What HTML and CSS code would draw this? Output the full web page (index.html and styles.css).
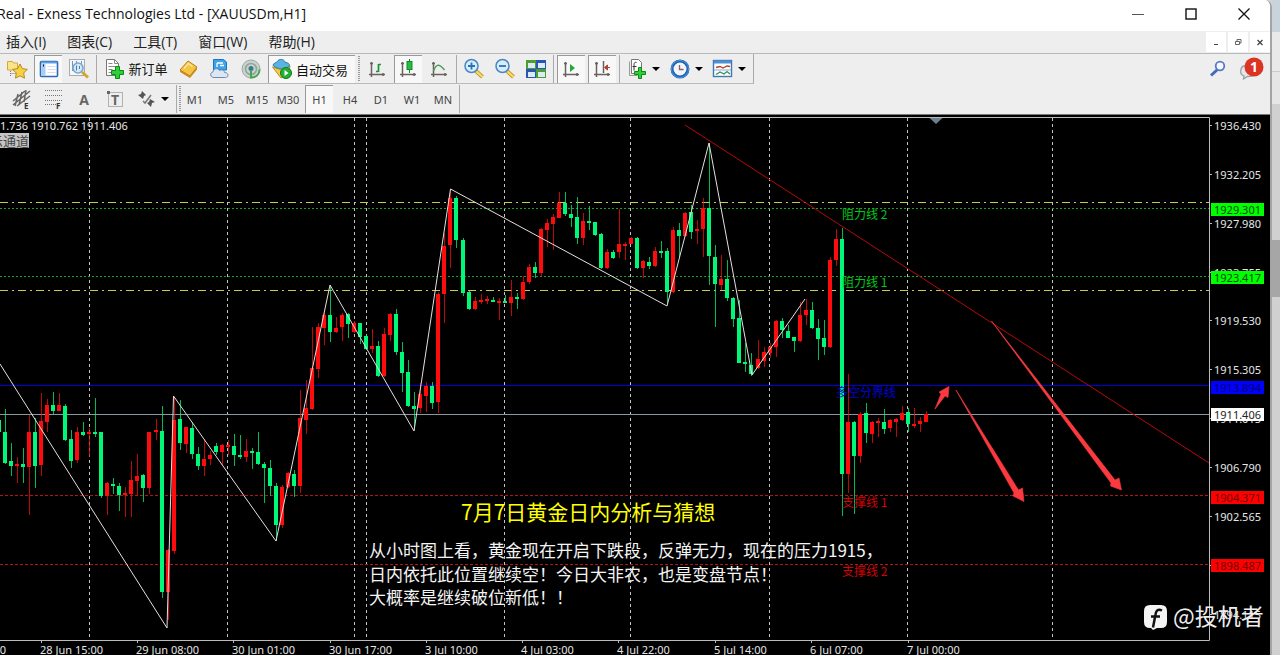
FILE: index.html
```
<!DOCTYPE html>
<html lang="zh-CN">
<head>
  <meta charset="UTF-8">
  <meta name="viewport" content="width=device-width, initial-scale=1.0">
  <title>Real - Exness Technologies Ltd - [XAUUSDm,H1]</title>
  <link rel="stylesheet" href="styles.css">
</head>
<body>
  <div class="window">
    <header class="titlebar">
      <h1>Real - Exness Technologies Ltd - [XAUUSDm,H1]</h1>
      <div class="window-controls">
        <button type="button" aria-label="Minimize"><svg width="14" height="14"><path d="M1 7.500h12" stroke="#555"/></svg></button>
        <button type="button" aria-label="Maximize"><svg width="14" height="14"><rect x="2" y="2" width="10" height="10" fill="none" stroke="#111" stroke-width="1.400"/></svg></button>
        <button type="button" aria-label="Close"><svg width="14" height="14"><path d="M1.500 1.500l11 11M12.500 1.500l-11 11" stroke="#111" stroke-width="1.300"/></svg></button>
      </div>
    </header>

    <nav class="menubar">
      <div class="menus">
        <button type="button">插入(I)</button>
        <button type="button">图表(C)</button>
        <button type="button">工具(T)</button>
        <button type="button">窗口(W)</button>
        <button type="button">帮助(H)</button>
      </div>
      <div class="mdi-controls">
        <button type="button" aria-label="Minimize chart"><svg width="10" height="10"><path d="M3 7.500h4" stroke="#444" stroke-width="1.200"/></svg></button>
        <button type="button" aria-label="Restore chart"><svg width="10" height="10" fill="none" stroke="#666"><path d="M2.500 4.500h4v3h-4zM4 4.500v-2h4v3.500h-1.500"/></svg></button>
        <button type="button" aria-label="Close chart"><svg width="10" height="10"><path d="M2.500 3l5 5M7.500 3l-5 5" stroke="#444" stroke-width="1.300"/></svg></button>
      </div>
    </nav>

    <div class="toolbar-row">
      <div class="toolbar main-tools">
        <button type="button" class="tool" aria-label="Profiles"><svg width="22" height="22"><path d="M1.500 3.500h5l1 1.500h4v7h-10z" fill="#fbe487" stroke="#d3aa3a"/><path d="M4.500 13v6M4.500 15.500h5" stroke="#777" stroke-dasharray="1 1"/><path d="M14 6l2.300 4.600 5 .8-3.600 3.600.8 5.200-4.500-2.400-4.500 2.400.8-5.200-3.600-3.600 5-.8z" fill="#f6d146" stroke="#b98a1b"/></svg></button>
        <button type="button" class="tool pressed" aria-label="Market watch"><svg width="20" height="20"><rect x="1.500" y="2.500" width="17" height="15" rx="1" fill="#fff" stroke="#2a6ab8" stroke-width="1.600"/><path d="M2 3.500h16" stroke="#5ea0e0" stroke-width="2"/><path d="M2.500 5h4v12h-4z" fill="#a9cdf2"/><path d="M4 5.500h1v2H4z" fill="#111"/><path d="M8.500 7.500h8M8.500 10.500h8M8.500 13.500h8" stroke="#d4deec"/></svg></button>
        <button type="button" class="tool" aria-label="Data window"><svg width="22" height="22"><rect x="1.500" y="1.500" width="15" height="16" fill="#f4f6f8" stroke="#aaa"/><path d="M4.500 3v10M13.500 3v6M8.500 3v4" stroke="#6a9bc4"/><path d="M14 14l6 5.500" stroke="#d5a52e" stroke-width="3"/><circle cx="10" cy="10" r="5" fill="#cfe6f8" fill-opacity=".85" stroke="#7ea6cc" stroke-width="1.600"/><path d="M8.500 7.500v5M11.500 8v3" stroke="#4b81b5"/></svg></button>
        <span class="sep"></span>
        <button type="button" class="tool wide"><svg width="22" height="22"><path d="M2.500 1.500h8l4 4v12h-12z" fill="#fff" stroke="#777"/><path d="M10.500 1.500v4h4M4.500 5.500h4M4.500 8.500h7M4.500 11.500h4M4.500 14.500h4" stroke="#888" fill="none"/><path d="M11.500 8.500h4v4h4v4h-4v4h-4v-4h-4v-4h4z" fill="#2fcf38" stroke="#0a8a16"/></svg>新订单</button>
        <button type="button" class="tool" aria-label="MetaEditor"><svg width="22" height="22"><path d="M2 12l8-9 9 6-7 9z" fill="#f4c443" stroke="#b87d18"/><path d="M2 12l10 6 7-9v2.500l-7 8.500-10-6z" fill="#c98a1c"/><path d="M6 10.500l4.500-5 4 3" stroke="#fde79b" fill="none" stroke-width="1.500"/></svg></button>
        <button type="button" class="tool" aria-label="Cloud"><svg width="22" height="22"><path d="M4.500 1.500h10l3 2.500v8h-13z" fill="#3da4ec" stroke="#1d75bb"/><path d="M8 5h6M8 5v4M11 7.500h4" stroke="#fff" stroke-width="1.300"/><path d="M5 19.500c-4 0-4.500-5-1-5.500 0-3.500 5-4.500 6.500-1.500 2.500-1.500 5 0 5 2 4.500 0 4.500 5 1 5z" fill="#dde7f4" stroke="#6c8bb5"/></svg></button>
        <button type="button" class="tool" aria-label="Signals"><svg width="22" height="22"><circle cx="11" cy="11" r="9" fill="#c9d2cc" stroke="#9aa9a0"/><circle cx="11" cy="11" r="5.500" fill="none" stroke="#8da898" stroke-width="1.600"/><circle cx="11" cy="10.500" r="2.500" fill="#3b7894"/><path d="M11 12v7.500c5 0 8.500-3 8.500-8" fill="none" stroke="#45a653" stroke-width="2"/></svg></button>
        <button type="button" class="tool auto pressed"><svg width="22" height="22"><path d="M1.500 9l9 3 8.500-4-2 9-7 3z" fill="#f2cc44" stroke="#bd8d1c"/><path d="M2 7.500c0-3 4-2 5-5 3-2.500 7-.5 7 2 3 0 5 1.500 4.500 3.500-4 3.500-11 4-16.500-.5z" fill="#5bb3e3" stroke="#2c7eb2"/><circle cx="15" cy="15" r="5.500" fill="#25b034" stroke="#0e7d1c"/><path d="M13.500 12v6l4-3z" fill="#fff"/></svg>自动交易</button>
        <span class="grip"></span>
        <button type="button" class="tool" aria-label="Bar chart"><svg width="20" height="20"><path class="axis" d="M4.500 3v15M2 15.500h16M3 4.500h3M16 14v3"/><path d="M11.500 5v8M9 12.500h2.500M11.500 5.500H14" stroke="#189632" stroke-width="1.700"/></svg></button>
        <button type="button" class="tool pressed" aria-label="Candlesticks"><svg width="20" height="20"><path class="axis" d="M3.500 3v15M1 15.500h16M2 4.500h3M15 14v3"/><path d="M10.500 0v14" stroke="#118a26"/><rect x="8" y="2.500" width="5" height="8" fill="#27bd42" stroke="#118a26"/></svg></button>
        <button type="button" class="tool" aria-label="Line chart"><svg width="20" height="20"><path class="axis" d="M4.500 3v15M2 15.500h16M3 4.500h3M16 14v3"/><path d="M4.500 12c3-8 6-7 11-1" stroke="#4e9d5c" stroke-width="1.400" fill="none"/></svg></button>
        <span class="sep"></span>
        <button type="button" class="tool" aria-label="Zoom in"><svg width="22" height="22"><path d="M13 13l6.500 6" stroke="#c99a26" stroke-width="4"/><path d="M13 13l6.500 6" stroke="#f6df6f" stroke-width="2"/><circle cx="8.500" cy="8" r="6.500" fill="#d7edfc" stroke="#4a86c4" stroke-width="1.500"/><path d="M5 8h7M8.500 4.500v7" stroke="#2872b8" stroke-width="1.800"/></svg></button>
        <button type="button" class="tool" aria-label="Zoom out"><svg width="22" height="22"><path d="M13 13l6.500 6" stroke="#c99a26" stroke-width="4"/><path d="M13 13l6.500 6" stroke="#f6df6f" stroke-width="2"/><circle cx="8.500" cy="8" r="6.500" fill="#d7edfc" stroke="#4a86c4" stroke-width="1.500"/><path d="M5 8h7" stroke="#2872b8" stroke-width="1.800"/></svg></button>
        <button type="button" class="tool" aria-label="Tile windows"><svg width="20" height="20"><path d="M0 1h10v9H0zM10 10h10v9H10z" fill="#4d9e2f"/><path d="M10 1h10v9H10zM0 10h10v9H0z" fill="#2a55b5"/><path d="M2 4h7v5H2zM12 4h7v5h-7zM2 13h7v5H2zM12 13h7v5h-7z" fill="#dbeaf5"/></svg></button>
        <span class="sep"></span>
        <button type="button" class="tool pressed" aria-label="Auto scroll"><svg width="20" height="20"><path class="axis" d="M3.500 3v15M1 15.500h16M2 4.500h3M15 14v3"/><path d="M8 5v8l5-4z" fill="#24a83b"/></svg></button>
        <button type="button" class="tool pressed" aria-label="Chart shift"><svg width="20" height="20"><path class="axis" d="M3.500 3v15M1 15.500h16M2 4.500h3M15 14v3M10.500 2v12"/><path d="M17 8.500h-4M14.500 6l-3 2.500 3 2.500z" fill="#b0412e" stroke="#b0412e"/></svg></button>
        <span class="sep"></span>
        <button type="button" class="tool drop" aria-label="Indicators"><svg width="22" height="22"><path d="M5.500 1.500h7l3 3v11h-10z" fill="#fff" stroke="#777"/><path d="M3.500 3.500v14h8" fill="none" stroke="#999"/><path d="M10.500 4.500c-2-1-2.500 1-2.500 3v5M6.500 8.500h4" stroke="#333" fill="none"/><path d="M12.500 9.500h3v4h4v3h-4v4h-3v-4h-4v-3h4z" fill="#2fcf38" stroke="#0a8a16"/></svg><span class="caret"></span></button>
        <button type="button" class="tool drop" aria-label="Periods"><svg width="22" height="22"><circle cx="11" cy="11" r="8" fill="#eef5fc" stroke="#1d5fae" stroke-width="3"/><circle cx="11" cy="11" r="8.500" fill="none" stroke="#4b9be4"/><path d="M10.500 7v4.500h4" fill="none" stroke="#a05b44" stroke-width="1.300"/></svg><span class="caret"></span></button>
        <button type="button" class="tool drop" aria-label="Templates"><svg width="22" height="22"><rect x="1.500" y="2.500" width="18" height="16" fill="#fff" stroke="#3f78b2" stroke-width="1.400"/><path d="M2 4h17" stroke="#4c91d6" stroke-width="3"/><path d="M4 9.500l4-1 3 1.500 4-2 3 .500" fill="none" stroke="#b0412e" stroke-width="1.300"/><path d="M2 12h17" stroke="#8bacd0"/><path d="M4 16.500l4-2.500 4 2 3-2.500 3 2.500" fill="none" stroke="#33915a" stroke-width="1.300"/></svg><span class="caret"></span></button>
      </div>
      <div class="corner-tools">
        <button type="button" aria-label="Search"><svg width="18" height="18"><path d="M8.500 9.500l-6.500 6" stroke="#4468bb" stroke-width="3"/><circle cx="11" cy="6" r="4.300" fill="#f4f7ff" stroke="#5878c4" stroke-width="1.800"/></svg></button>
        <button type="button" aria-label="Notifications"><svg width="28" height="24"><path d="M8 8.500c-5 1-6 9-1 10.500l-.5 3 4-2.500c4 0 7-1 8-3" fill="#e4e6ea" stroke="#9a9ea6" stroke-width="1.300"/><circle cx="17" cy="10" r="9.500" fill="#dc3322"/><text x="17" y="15" class="badge">1</text></svg></button>
      </div>
    </div>

    <div class="toolbar-row second">
      <div class="toolbar draw-tools">
        <button type="button" class="tool" aria-label="Channel"><svg width="22" height="22"><path d="M2 17L19 3M2 13L14 3M6 18L19 8M7 6l-3 12M11 4L8 17M15 2l-2 12" stroke="#666" stroke-width="1.500"/><text x="13" y="21" class="tiny">E</text></svg></button>
        <button type="button" class="tool" aria-label="Fibonacci"><svg width="22" height="22"><path d="M3 2.500h17M3 7.500h17M3 12.500h17M3 16.500h11" stroke="#777" stroke-dasharray="1 1"/><text x="14" y="21" class="tiny">F</text></svg></button>
        <button type="button" class="tool letter">A</button>
        <button type="button" class="tool" aria-label="Text label"><svg width="20" height="20"><rect x="3.500" y="3.500" width="14" height="14" fill="none" stroke="#777" stroke-dasharray="1 1"/><path d="M2 2h3v3H2z" fill="#666"/><text x="10" y="16" class="label-letter">T</text></svg></button>
        <button type="button" class="tool drop" aria-label="Arrows"><svg width="22" height="22"><path d="M7 3l4 4-2 1-1 3-5-4 3-1zM15 11l5 3-3 1-1 4-4-4 2-1z" fill="#555"/><path d="M8 13l2 2 6-8" fill="none" stroke="#777" stroke-width="1.500"/></svg><span class="caret"></span></button>
      </div>
      <span class="grip"></span>
      <div class="toolbar periods">
        <button type="button">M1</button>
        <button type="button">M5</button>
        <button type="button">M15</button>
        <button type="button">M30</button>
        <button type="button" class="pressed">H1</button>
        <button type="button">H4</button>
        <button type="button">D1</button>
        <button type="button">W1</button>
        <button type="button">MN</button>
      </div>
    </div>

    <main class="chart">
      <svg id="chart" viewBox="0 114 1270 541" role="img" aria-label="XAUUSDm H1"></svg>
      <button type="button" class="channel">示通道</button>
    </main>
  </div>
  <aside class="behind"><div class="thumb"></div></aside>

  <script src="chart.js"></script>
</body>
</html>
```

FILE: styles.css
```
* {
  box-sizing: border-box;
}
body {
  margin: 0;
  display: flex;
  align-items: stretch;
  min-height: 100vh;
  overflow: hidden;
  background: #d5d5d5;
  font-family: "Open Sans", "Noto Sans CJK SC", sans-serif;
  color: #222;
}
button {
  display: flex;
  align-items: center;
  justify-content: center;
  margin: 0;
  padding: 0;
  border: 0;
  background: none;
  color: inherit;
  font: inherit;
  white-space: nowrap;
}
.window {
  flex: 1;
  min-width: 0;
  background: #eeeeee;
  border-right: 2px solid #a4a4a4;
  border-top-right-radius: 7px;
  overflow: hidden;
}

/* title and menu */
.titlebar {
  display: flex;
  justify-content: space-between;
  height: 31px;
  background: #fff;
}
h1 {
  margin: 0;
  font-size: 14px;
  font-weight: normal;
  line-height: 28px;
  text-indent: -3px;
  white-space: nowrap;
  color: #111;
}
.window-controls {
  display: flex;
}
.window-controls button {
  width: 53px;
  height: 28px;
}
.menubar {
  display: flex;
  justify-content: space-between;
  height: 23px;
  border-bottom: 1px solid #b9b9b9;
  font-size: 14px;
}
.menus {
  display: flex;
  gap: 21px;
  padding-left: 6px;
  padding-bottom: 2px;
}
.mdi-controls {
  display: flex;
  gap: 2px;
  padding: 1px 0;
}
.mdi-controls button {
  width: 20px;
  background: #fff;
}

/* toolbars */
.toolbar-row {
  display: flex;
  justify-content: space-between;
  height: 30px;
}
.toolbar {
  display: flex;
  align-items: center;
  gap: 3px;
  padding-left: 3px;
  font-size: 13px;
  color: #111;
}
.main-tools {
  padding-right: 4px;
  border-right: 1px solid #aaa;
  border-bottom: 1px solid #bbb;
}
.tool {
  flex: none;
  width: 28px;
  height: 28px;
}
.wide {
  width: 72px;
  gap: 2px;
}
.auto {
  width: 87px;
  gap: 3px;
  justify-content: flex-start;
  padding-left: 2px;
}
.drop {
  width: 40px;
  gap: 4px;
}
.pressed {
  background: #f8f8f8;
  border-left: 1px solid #999;
  border-top: 1px solid #999;
}
.sep {
  width: 1px;
  height: 28px;
  background: #aaa;
}
.grip {
  width: 2px;
  height: 26px;
  background: repeating-linear-gradient(#999 0 1px, #eee 1px 2px);
}
.caret {
  border: 4px solid transparent;
  border-top-color: #000;
  border-bottom: 0;
}
.axis {
  fill: none;
  stroke: #6b6060;
  stroke-width: 1.5;
}
.corner-tools {
  display: flex;
  gap: 10px;
  padding-right: 5px;
}
.badge {
  fill: #fff;
  font-size: 14px;
  font-weight: bold;
  text-anchor: middle;
}
.second {
  justify-content: flex-start;
  align-items: center;
}
.draw-tools {
  padding-left: 8px;
  padding-right: 4px;
  margin-right: 2px;
  border-right: 1px solid #aaa;
}
.tiny {
  font-size: 8px;
  font-weight: bold;
  fill: #333;
}
.letter {
  font-size: 14px;
  font-weight: bold;
  color: #666;
}
.label-letter {
  font-size: 14px;
  font-weight: bold;
  fill: #666;
  text-anchor: middle;
}
.periods {
  height: 28px;
  padding-left: 0;
  padding-right: 2px;
  border-right: 1px solid #aaa;
  font-family: "Noto Sans", sans-serif;
  font-size: 11px;
  color: #444;
}
.periods button {
  width: 28px;
  height: 28px;
}

/* chart */
.chart {
  position: relative;
  background: #000;
}
.chart > svg {
  display: block;
  width: 100%;
}
.channel {
  position: absolute;
  left: 0;
  top: 19px;
  width: 29px;
  height: 15px;
  overflow: hidden;
  justify-content: flex-end;
  background: #c4c4c4;
  color: #444;
  font-size: 13px;
}
.scale {
  font-family: "Noto Sans", sans-serif;
  font-size: 11px;
  fill: #e6e6e6;
}
.level {
  font-family: "Noto Sans CJK SC", sans-serif;
  font-size: 12px;
}
.headline {
  font-family: "Noto Sans CJK SC", sans-serif;
  font-size: 21px;
  fill: #ffff00;
}
.note {
  font-family: "Noto Sans CJK SC", sans-serif;
  font-size: 17px;
  fill: #f4f4f4;
}
.watermark {
  font-family: "Noto Sans CJK SC", sans-serif;
  font-size: 23px;
  fill: #eee;
}

/* scrollbar of the page behind the window */
.behind {
  flex: none;
  width: 8px;
  padding-top: 240px;
  background: linear-gradient(#c9d3dc 0 32px, #e9e9e9 32px 71px, #ccc 71px 72px, #e6e6e6 72px 104px, #d0d0d0 104px);
}
.thumb {
  height: 57px;
  background: #a6a6a6;
}
```

FILE: chart.js
```
const RED = '#fe0b0b';
const GREEN = '#00f878';
const STEP = 6.02;

// one row per candle: high, body top, body bottom, low, up or down
const candles = `
409 432 463 464 g|443 461 466 476 g|457 464 466 483 r|448 464 467 483 g|415 432 467 515 r
418 432 466 488 g|393 421 465 476 r|399 405 422 432 r|392 405 411 414 g|393 405 411 411 r
404 406 440 441 g|430 439 461 468 g|427 432 460 463 r|422 432 435 436 g|428 432 434 457 r
398 432 434 437 g|432 432 496 498 g|482 483 496 515 r|478 484 486 494 g|483 486 495 511 g
487 493 495 517 r|461 480 494 517 r|454 476 481 496 r|474 475 488 502 g|432 432 488 494 r
419 430 432 440 r|406 431 592 598 g|549 550 592 620 r|397 420 551 554 r|400 419 443 450 g
427 427 444 453 r|422 428 454 459 g|447 454 466 470 g|439 459 466 476 r|451 455 459 465 r
443 446 452 455 g|444 445 452 465 r|440 445 446 455 r|434 446 455 466 g|435 455 457 459 g
439 451 457 462 r|448 451 452 469 g|432 452 464 465 g|462 464 468 503 g|460 468 486 496 g
483 486 525 541 g|485 487 525 528 r|472 473 487 488 r|470 474 486 497 g|390 418 486 493 r
380 408 420 434 r|327 368 409 410 r|323 327 369 378 r|313 315 328 345 r|285 315 332 342 g
317 328 332 333 r|313 315 327 341 r|313 314 324 338 g|321 323 332 333 r|323 323 337 344 g
335 336 349 350 g|329 346 349 353 r|341 346 376 377 g|328 334 376 377 r|313 314 335 341 r
309 314 352 355 g|342 352 373 392 g|360 372 406 407 g|392 406 409 430 g|383 394 408 413 r
382 386 396 412 r|382 386 403 409 g|292 294 402 413 r|233 246 294 323 r|190 198 245 268 r
196 198 240 248 g|238 240 293 296 g|291 292 309 310 g|297 301 309 310 r|294 300 302 304 r
296 299 300 304 r|297 300 302 302 g|298 301 302 320 r|295 301 303 303 g|280 297 303 316 r
293 297 299 309 g|276 282 299 300 r|264 267 282 284 r|262 267 273 278 g|228 229 273 277 r
219 223 230 247 r|214 217 224 250 r|192 203 218 218 r|192 203 214 216 g|205 214 218 227 g
197 217 238 244 g|213 221 238 245 r|206 221 223 230 g|222 222 235 236 g|233 234 268 269 g
249 252 268 269 r|250 252 258 259 g|209 244 252 258 r|242 244 245 260 r|237 238 244 244 r
237 238 268 269 g|260 261 268 278 r|257 262 266 269 g|247 251 266 267 r|241 251 252 258 g
248 251 292 304 g|227 230 292 293 r|223 230 236 257 g|212 213 236 237 r|205 212 232 239 g
220 229 231 244 r|198 208 229 257 r|143 208 256 285 g|245 257 284 327 g|255 279 285 290 r
260 279 298 301 g|297 298 319 327 g|300 318 363 363 g|343 362 364 372 g|353 365 374 376 g
340 359 368 369 r|347 352 361 367 r|343 347 353 358 r|320 321 347 357 r|318 321 330 338 g
325 331 338 338 g|337 337 341 352 g|302 315 341 342 r|299 310 315 325 r|302 310 328 329 g
319 328 339 360 g|320 338 347 355 g|257 260 347 348 r|229 239 260 266 r|228 239 474 516 g
374 422 474 493 r|421 422 456 514 g|412 414 456 463 r|403 413 433 443 g|421 422 434 443 r
418 421 422 437 r|409 422 429 434 g|419 420 428 432 r|418 419 422 437 r|406 413 420 421 r
408 412 424 432 g|408 424 425 428 r|417 421 424 432 r|411 414 422 422 r
`.trim().split(/[|\n]/).map(row => row.split(' '));

const daySeparators = [89.5, 227.5, 354.5, 366.5, 504.5, 630.5, 769.5, 907.5, 1052.5];

// y, colour, dash pattern
const levels = [
  [202.5, '#c8c84c', '8 4 2 4'],
  [290.5, '#c8c84c', '8 4 2 4'],
  [208.5, '#18a02c', '2 2'],
  [276.5, '#18a02c', '2 2'],
  [385.5, '#0000dc', ''],
  [414.5, '#8c98a0', ''],
  [495.5, '#b01414', '3 2'],
  [564.5, '#b01414', '3 2']
];

const levelNames = [
  [842, 219, '#00c818', '阻力线 2'],
  [842, 287, '#00c818', '阻力线 1'],
  [836, 397, '#0000dc', '多空分界线'],
  [842, 507, '#d80000', '支撑线 1'],
  [842, 576, '#d80000', '支撑线 2']
];

const prices = [
  [126, '1936.430'], [175, '1932.205'], [224, '1927.980'], [273, '1923.755'],
  [321, '1919.530'], [370, '1915.305'], [419, '1911.015'], [468, '1906.790'],
  [517, '1902.565'], [566, '1898.340'], [615, '1894.115']
];

const priceTags = [
  [210, '#00ff00', '#004800', '1929.301'],
  [278, '#00ff00', '#004800', '1923.417'],
  [388, '#0000ff', '#000070', '1913.894'],
  [415, '#ffffff', '#222222', '1911.406'],
  [498, '#ff0000', '#700000', '1904.371'],
  [566, '#ff0000', '#700000', '1898.487']
];

const times = [
  [-57, '27 Jun 22:00'], [40, '28 Jun 15:00'], [136, '29 Jun 08:00'], [232, '30 Jun 01:00'],
  [329, '30 Jun 17:00'], [425, '3 Jul 10:00'], [521, '4 Jul 03:00'], [617, '4 Jul 22:00'],
  [714, '5 Jul 14:00'], [810, '6 Jul 07:00'], [907, '7 Jul 00:00']
];

const notes = [
  [557, '从小时图上看，黄金现在开启下跌段，反弹无力，现在的压力1915，'],
  [581, '日内依托此位置继续空！今日大非农，也是变盘节点！'],
  [604, '大概率是继续破位新低！！']
];

let out = '<path d="M0 114.500h1270" stroke="#777"/><path d="M0 117.500h1209.500v523H0" fill="none" stroke="#bbb"/>';

daySeparators.forEach(x => {
  out += `<path d="M${x} 118v522" stroke="#c4c4c4" stroke-dasharray="3 3"/>`;
});
levels.forEach(([y, color, dash]) => {
  out += `<path d="M0 ${y}h1209" stroke="${color}" stroke-dasharray="${dash}"/>`;
});

out += `<rect x="0" y="420" width="1" height="12" fill="${GREEN}"/>`;
candles.forEach(([high, top, bottom, low, dir], i) => {
  const x = Math.round(5 + i * STEP);
  const color = dir === 'r' ? RED : GREEN;
  out += `<path d="M${x + 0.5} ${high}V${low}" stroke="${color}" stroke-opacity=".75"/>`;
  out += `<rect x="${x - 2}" y="${top}" width="4" height="${Math.max(2, bottom - top)}" fill="${color}"/>`;
});

out += '<path d="M0 364L167 628L173.500 396L276 541L330 285L414 431L450.500 189L667 306L709 143L752 375L805 299" fill="none" stroke="#e8dede"/>';
out += '<path d="M685 125L1209 463" stroke="#b80808"/>';

levelNames.forEach(([x, y, color, name]) => {
  out += `<text class="level" x="${x}" y="${y}" fill="${color}">${name}</text>`;
});

// hand-drawn arrows
out += `<g fill="#fb3a40" stroke="#fb3a40" stroke-width=".6">
  <path d="M935 409L941 394L939 392L949 386.500L948 397.500L945 396Z"/>
  <path d="M956 390L1018.500 490L1022.500 488L1024 501.500L1013 496L1014 493Z"/>
  <path d="M991.500 321L1115 480L1119 478L1121.500 490L1110.500 486L1111 483Z"/>
</g>`;
out += '<path d="M929.500 118h13l-6.500 6z" fill="#6d7f8e"/>';

prices.forEach(([y, text]) => {
  out += `<path d="M1209 ${y - 0.5}h3" stroke="#bbb"/><text class="scale" x="1214" y="${y + 4}">${text}</text>`;
});
priceTags.forEach(([y, fill, color, text]) => {
  out += `<rect x="1211" y="${y - 7}" width="53" height="13" fill="${fill}"/>`;
  out += `<text class="scale" x="1214" y="${y + 4}" style="fill:${color}">${text}</text>`;
});
times.forEach(([x, text]) => {
  out += `<path d="M${x + 1.5} 640v3" stroke="#bbb"/><text class="scale" x="${x}" y="654">${text}</text>`;
});

out += '<text class="scale" x="0" y="130">1.736 1910.762 1911.406</text>';
out += '<text class="headline" x="461" y="520">7月7日黄金日内分析与猜想</text>';
notes.forEach(([y, text]) => {
  out += `<text class="note" x="369" y="${y}">${text}</text>`;
});

out += `<path d="M1150 605h11q6 0 6 6v11q0 6-6 6h-4l-4 2-2-2h-1q-6 0-6-6v-11q0-6 6-6z" fill="#f4f4f4"/>
  <path d="M1162 610.500c-4-2-6 0-6.500 4l-2.500 13M1151 616.500h9" fill="none" stroke="#111" stroke-width="2.500"/>
  <text class="watermark" x="1173" y="625">@投机者</text>`;

document.getElementById('chart').innerHTML = out;
```
